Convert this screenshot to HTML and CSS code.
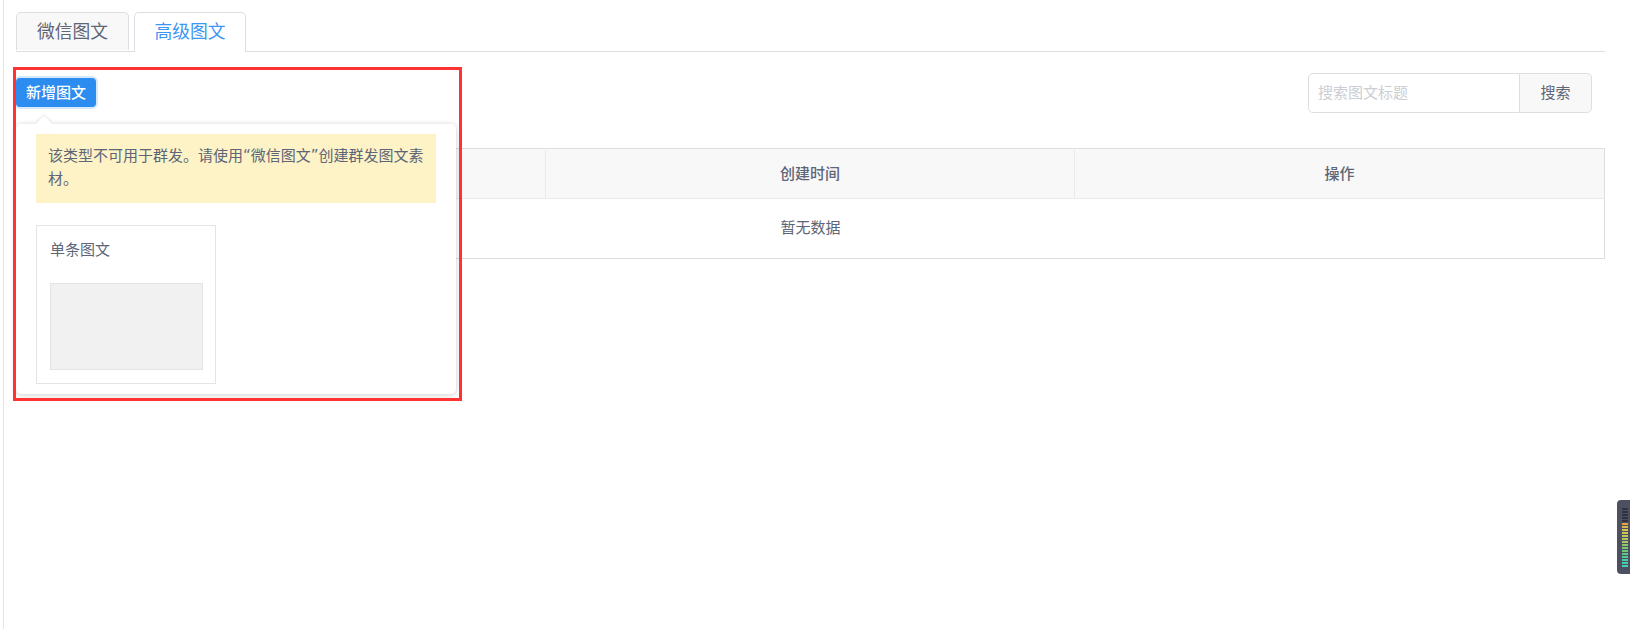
FILE: index.html
```html
<!DOCTYPE html>
<html lang="zh-CN">
<head>
<meta charset="utf-8">
<title>图文素材</title>
<link rel="stylesheet" href="styles.css">
</head>
<body>
<div class="page">
  <div class="tabs">
    <div class="tab">微信图文</div>
    <div class="tab tab-active">高级图文</div>
  </div>
  <div class="toolbar">
    <button class="btn-add">新增图文</button>
    <div class="search">
      <input class="search-input" placeholder="搜索图文标题">
      <button class="search-btn">搜索</button>
    </div>
    <div class="popover">
      <div class="popover-arrow"></div>
      <div class="alert">该类型不可用于群发。请使用“微信图文”创建群发图文素材。</div>
      <div class="card">
        <div class="card-title">单条图文</div>
        <div class="card-thumb"></div>
      </div>
    </div>
    <div class="highlight"></div>
  </div>
  <table class="table">
    <colgroup><col class="col-a"><col class="col-b"><col class="col-c"></colgroup>
    <thead>
      <tr><th></th><th>创建时间</th><th>操作</th></tr>
    </thead>
    <tbody>
      <tr><td colspan="3">暂无数据</td></tr>
    </tbody>
  </table>
</div>
<div class="meter">
  <svg width="13" height="74" viewBox="0 0 13 74">
    <g fill="#2f3340">
      <rect x="5" y="8" width="6" height="2"/><rect x="5" y="11" width="6" height="2"/><rect x="5" y="14" width="6" height="2"/><rect x="5" y="17" width="6" height="2"/><rect x="5" y="20" width="6" height="2"/>
    </g>
    <rect x="5" y="23" width="6" height="2" fill="#e8a33c"/>
    <rect x="5" y="26" width="6" height="2" fill="#d9b64c"/>
    <rect x="5" y="29" width="6" height="2" fill="#d8c450"/>
    <rect x="5" y="32" width="6" height="2" fill="#cfc852"/>
    <rect x="5" y="35" width="6" height="2" fill="#c4c858"/>
    <rect x="5" y="38" width="6" height="2" fill="#b4c860"/>
    <rect x="5" y="41" width="6" height="2" fill="#a2c864"/>
    <rect x="5" y="44" width="6" height="2" fill="#8ec86c"/>
    <rect x="5" y="47" width="6" height="2" fill="#7cc874"/>
    <rect x="5" y="50" width="6" height="2" fill="#6cc87c"/>
    <rect x="5" y="53" width="6" height="2" fill="#5ccb88"/>
    <rect x="5" y="56" width="6" height="2" fill="#50cc94"/>
    <rect x="5" y="59" width="6" height="2" fill="#48cea0"/>
    <rect x="5" y="62" width="6" height="2" fill="#44d0a8"/>
    <rect x="5" y="65" width="6" height="2" fill="#40d4b0"/>
  </svg>
</div>
</body>
</html>
```
FILE: styles.css
```css
* { box-sizing: border-box; }
html, body { margin: 0; height: 100%; overflow: hidden; background: #fff; }
body {
  font-family: "Noto Sans CJK SC", "Liberation Sans", sans-serif;
  font-size: 15px;
  color: #5d6577;
}
.page {
  margin-left: 3px;
  height: 629px;
  border-left: 1px solid #e4e4e4;
  padding: 12px 25px 0 12px;
}
.tabs {
  display: flex;
  gap: 5px;
  height: 40px;
  border-bottom: 1px solid #dcdee2;
}
.tab {
  width: 113px;
  height: 38px;
  border: 1px solid #dcdee2;
  border-bottom: 0;
  border-radius: 5px 5px 0 0;
  background: #f8f8f9;
  font-size: 17.8px;
  line-height: 35px;
  text-align: center;
}
.tab-active {
  height: 40px;
  width: 112px;
  background: #fff;
  color: #3d96f2;
}
.toolbar {
  position: relative;
  display: flex;
  justify-content: space-between;
  align-items: flex-start;
  margin-top: 21px;
  padding-right: 13px;
  height: 40px;
}
.btn-add {
  margin-top: 5px;
  width: 80px;
  height: 29px;
  padding: 0 0 2px;
  border: 0;
  border-radius: 4px;
  background: #2d8cf0;
  box-shadow: 0 0 0 2px rgba(45, 140, 240, .2);
  color: #fff;
  font: 500 15px/27px "Noto Sans CJK SC", sans-serif;
}
.search { display: flex; width: 284px; height: 40px; }
.search-input {
  flex: 1;
  min-width: 0;
  padding: 0 9px 3px;
  border: 1px solid #dcdee2;
  border-radius: 5px 0 0 5px;
  outline: 0;
  font: 15px "Noto Sans CJK SC", sans-serif;
  color: #515a6e;
}
.search-input::placeholder { color: #cbced3; opacity: 1; }
.search-btn {
  width: 72px;
  padding: 0 0 4px;
  border: 1px solid #dcdee2;
  border-left: 0;
  border-radius: 0 5px 5px 0;
  background: #f8f8f9;
  color: #5d6577;
  font: 15px "Noto Sans CJK SC", sans-serif;
}
.popover {
  position: absolute;
  z-index: 2;
  top: 51px;
  left: 0;
  width: 440px;
  height: 270px;
  padding: 10px 20px;
  border-radius: 5px;
  background: #fff;
  box-shadow: 0 1px 6px rgba(0, 0, 0, .2);
}
.popover-arrow {
  position: absolute;
  top: -6px;
  left: 22px;
  width: 12px;
  height: 12px;
  background: #fff;
  transform: rotate(45deg);
  box-shadow: -1px -1px 2px rgba(0, 0, 0, .08);
}
.alert {
  position: relative;
  height: 69px;
  padding: 11px 12px;
  background: #fef3c6;
  font-family: "DejaVu Sans", "Noto Sans CJK SC", sans-serif;
  line-height: 23px;
}
.card {
  width: 180px;
  height: 159px;
  margin-top: 22px;
  padding: 13px 13px 0;
  border: 1px solid #e4e4e4;
}
.card-title { height: 44px; line-height: 20px; }
.card-thumb {
  width: 153px;
  height: 87px;
  background: #f1f1f1;
  border: 1px solid #e4e4e4;
}
.highlight {
  position: absolute;
  z-index: 3;
  top: -6px;
  left: -3px;
  width: 449px;
  height: 334px;
  border: 3px solid #f33;
  pointer-events: none;
}
.table {
  width: 1588px;
  margin-top: 35px;
  border: 1px solid #dcdee2;
  border-collapse: collapse;
  table-layout: fixed;
}
.col-a { width: 529px; }
.col-b { width: 529px; }
.col-c { width: 530px; }
.table th {
  height: 50px;
  padding: 0 0 2px;
  background: #f8f8f9;
  border-left: 1px solid #e8eaec;
  border-bottom: 1px solid #e8eaec;
  font-weight: 500;
  font-size: 15px;
}
.table th:first-child { border-left: 0; }
.table td {
  height: 60px;
  padding: 0 0 4px;
  text-align: center;
}
.meter {
  position: fixed;
  top: 500px;
  right: 0;
  width: 13px;
  height: 74px;
  border-radius: 4px 0 0 4px;
  background: #4c5060;
}
.meter svg { display: block; }
```
